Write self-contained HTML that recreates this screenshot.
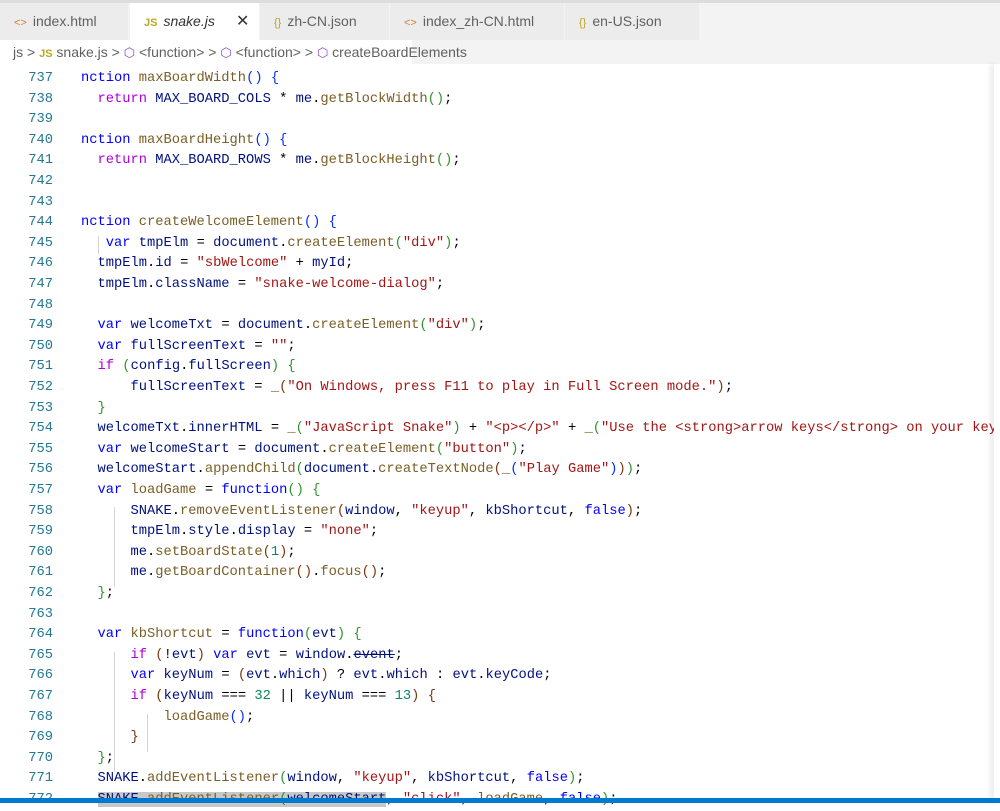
<!DOCTYPE html>
<html><head><meta charset="utf-8"><style>
*{margin:0;padding:0;box-sizing:border-box}
body{width:1000px;height:803px;overflow:hidden;background:#fff;font-family:"Liberation Sans",sans-serif;position:relative}
.top{position:absolute;left:0;top:0;width:1000px;height:3px;background:#dcdcdc}
.tabs{position:absolute;left:0;top:3px;width:1000px;height:37px;background:#f3f3f3}
.tab{position:absolute;top:0;height:37px;background:#ececec;font-size:14px;color:#616161;line-height:37px;border-right:1px solid #f3f3f3}
.tab .ic{font-size:11px;margin:0 6px 0 14px}
.bc{position:absolute;left:0;top:40px;width:1000px;height:24px;background:#f3f3f3}
.bcw{position:absolute;left:0;top:0;width:412px;height:24px;background:#fff;font-size:14px;color:#616161;line-height:24px;padding-left:13px;white-space:nowrap}
.cube{color:#8a4ec5;font-size:13px}
.code{position:absolute;left:0;top:69px;font-family:"Liberation Mono",monospace;font-size:13.75px;line-height:20.6px;white-space:pre}
.ln{position:absolute;left:0;width:53px;text-align:right;color:#237893}
.tx{position:absolute;left:81px}
.k{color:#0000ff}.c{color:#af00db}.f{color:#795e26}.v{color:#001080}.s{color:#a31515}.n{color:#098658}
.b1{color:#0431fa}.b2{color:#319331}.b3{color:#7b3814}
.guide{position:absolute;width:1px;background:#d3d3d3}
.rs{position:absolute;left:994px;top:64px;width:6px;height:739px;background:#fff;box-shadow:-4px 0 5px rgba(0,0,0,.08)}
.status{position:absolute;left:0;top:798px;width:1000px;height:5px;background:#007acc}
</style></head><body>
<div class="top"></div>
<div class="tabs">
<div class="tab" style="left:0;width:129px"><span class="ic" style="color:#e37933">&lt;&gt;</span>index.html</div>
<div class="tab" style="left:130px;width:130px;background:#fff;color:#333"><span class="ic" style="color:#b8a824;font-weight:bold">JS</span><i>snake.js</i><span style="position:absolute;left:106px;font-size:16px">✕</span></div>
<div class="tab" style="left:260px;width:130px"><span class="ic" style="color:#b8a824">{}</span>zh-CN.json</div>
<div class="tab" style="left:390px;width:175px"><span class="ic" style="color:#e37933">&lt;&gt;</span>index_zh-CN.html</div>
<div class="tab" style="left:565px;width:135px"><span class="ic" style="color:#b8a824">{}</span>en-US.json</div>
</div>
<div class="bc"><div class="bcw">js &gt; <span style="color:#b8a824;font-size:11px;font-weight:bold">JS</span> snake.js &gt; <span class="cube">⬡</span> &lt;function&gt; &gt; <span class="cube">⬡</span> &lt;function&gt; &gt; <span class="cube">⬡</span> createBoardElements</div></div>
<div class="code" id="c"></div>
<div class="guide" style="left:114px;top:652px;height:120px"></div>
<div class="guide" style="left:147px;top:714px;height:38px"></div>
<div class="guide" style="left:98px;top:236px;height:18px"></div>
<div class="guide" style="left:114px;top:507px;height:80px"></div>
<div class="rs"></div>
<div class="status"></div>
<script>
var L=[
['737','<span class="k">nction</span> <span class="f">maxBoardWidth</span><span class="b1">()</span> <span class="b1">{</span>'],
['738','  <span class="c">return</span> <span class="v">MAX_BOARD_COLS</span> * <span class="v">me</span>.<span class="f">getBlockWidth</span><span class="b2">()</span>;'],
['739',''],
['740','<span class="k">nction</span> <span class="f">maxBoardHeight</span><span class="b1">()</span> <span class="b1">{</span>'],
['741','  <span class="c">return</span> <span class="v">MAX_BOARD_ROWS</span> * <span class="v">me</span>.<span class="f">getBlockHeight</span><span class="b2">()</span>;'],
['742',''],['743',''],
['744','<span class="k">nction</span> <span class="f">createWelcomeElement</span><span class="b1">()</span> <span class="b1">{</span>'],
['745','   <span class="k">var</span> <span class="v">tmpElm</span> = <span class="v">document</span>.<span class="f">createElement</span><span class="b2">(</span><span class="s">"div"</span><span class="b2">)</span>;'],
['746','  <span class="v">tmpElm</span>.<span class="v">id</span> = <span class="s">"sbWelcome"</span> + <span class="v">myId</span>;'],
['747','  <span class="v">tmpElm</span>.<span class="v">className</span> = <span class="s">"snake-welcome-dialog"</span>;'],
['748',''],
['749','  <span class="k">var</span> <span class="v">welcomeTxt</span> = <span class="v">document</span>.<span class="f">createElement</span><span class="b2">(</span><span class="s">"div"</span><span class="b2">)</span>;'],
['750','  <span class="k">var</span> <span class="v">fullScreenText</span> = <span class="s">""</span>;'],
['751','  <span class="c">if</span> <span class="b2">(</span><span class="v">config</span>.<span class="v">fullScreen</span><span class="b2">)</span> <span class="b2">{</span>'],
['752','      <span class="v">fullScreenText</span> = <span class="f">_</span><span class="b3">(</span><span class="s">"On Windows, press F11 to play in Full Screen mode."</span><span class="b3">)</span>;'],
['753','  <span class="b2">}</span>'],
['754','  <span class="v">welcomeTxt</span>.<span class="v">innerHTML</span> = <span class="f">_</span><span class="b2">(</span><span class="s">"JavaScript Snake"</span><span class="b2">)</span> + <span class="s">"&lt;p&gt;&lt;/p&gt;"</span> + <span class="f">_</span><span class="b2">(</span><span class="s">"Use the &lt;strong&gt;arrow keys&lt;/strong&gt; on your keyboard"</span>'],
['755','  <span class="k">var</span> <span class="v">welcomeStart</span> = <span class="v">document</span>.<span class="f">createElement</span><span class="b2">(</span><span class="s">"button"</span><span class="b2">)</span>;'],
['756','  <span class="v">welcomeStart</span>.<span class="f">appendChild</span><span class="b2">(</span><span class="v">document</span>.<span class="f">createTextNode</span><span class="b3">(</span><span class="f">_</span><span class="b1">(</span><span class="s">"Play Game"</span><span class="b1">)</span><span class="b3">)</span><span class="b2">)</span>;'],
['757','  <span class="k">var</span> <span class="f">loadGame</span> = <span class="k">function</span><span class="b2">()</span> <span class="b2">{</span>'],
['758','      <span class="v">SNAKE</span>.<span class="f">removeEventListener</span><span class="b3">(</span><span class="v">window</span>, <span class="s">"keyup"</span>, <span class="v">kbShortcut</span>, <span class="k">false</span><span class="b3">)</span>;'],
['759','      <span class="v">tmpElm</span>.<span class="v">style</span>.<span class="v">display</span> = <span class="s">"none"</span>;'],
['760','      <span class="v">me</span>.<span class="f">setBoardState</span><span class="b3">(</span><span class="n">1</span><span class="b3">)</span>;'],
['761','      <span class="v">me</span>.<span class="f">getBoardContainer</span><span class="b3">()</span>.<span class="f">focus</span><span class="b3">()</span>;'],
['762','  <span class="b2">}</span>;'],
['763',''],
['764','  <span class="k">var</span> <span class="f">kbShortcut</span> = <span class="k">function</span><span class="b2">(</span><span class="v">evt</span><span class="b2">)</span> <span class="b2">{</span>'],
['765','      <span class="c">if</span> <span class="b3">(</span>!<span class="v">evt</span><span class="b3">)</span> <span class="k">var</span> <span class="v">evt</span> = <span class="v">window</span>.<span class="v" style="text-decoration:line-through">event</span>;'],
['766','      <span class="k">var</span> <span class="v">keyNum</span> = <span class="b3">(</span><span class="v">evt</span>.<span class="v">which</span><span class="b3">)</span> ? <span class="v">evt</span>.<span class="v">which</span> : <span class="v">evt</span>.<span class="v">keyCode</span>;'],
['767','      <span class="c">if</span> <span class="b3">(</span><span class="v">keyNum</span> === <span class="n">32</span> || <span class="v">keyNum</span> === <span class="n">13</span><span class="b3">)</span> <span class="b3">{</span>'],
['768','          <span class="f">loadGame</span><span class="b1">()</span>;'],
['769','      <span class="b3">}</span>'],
['770','  <span class="b2">}</span>;'],
['771','  <span class="v">SNAKE</span>.<span class="f">addEventListener</span><span class="b2">(</span><span class="v">window</span>, <span class="s">"keyup"</span>, <span class="v">kbShortcut</span>, <span class="k">false</span><span class="b2">)</span>;'],
['772','  <span style="background:#c8c8c8"><span class="v">SNAKE</span>.<span class="f">addEventListener</span><span class="b2">(</span><span class="v">welcomeStart</span></span>, <span class="s">"click"</span>, <span class="f">loadGame</span>, <span class="k">false</span><span class="b2">)</span>;']
];
var h='';L.forEach(function(l,i){var t=i*20.6;h+='<div class="ln" style="top:'+t+'px">'+l[0]+'</div><div class="tx" style="top:'+t+'px">'+l[1]+'</div>';});
document.getElementById('c').innerHTML=h;
</script>
</body></html>
